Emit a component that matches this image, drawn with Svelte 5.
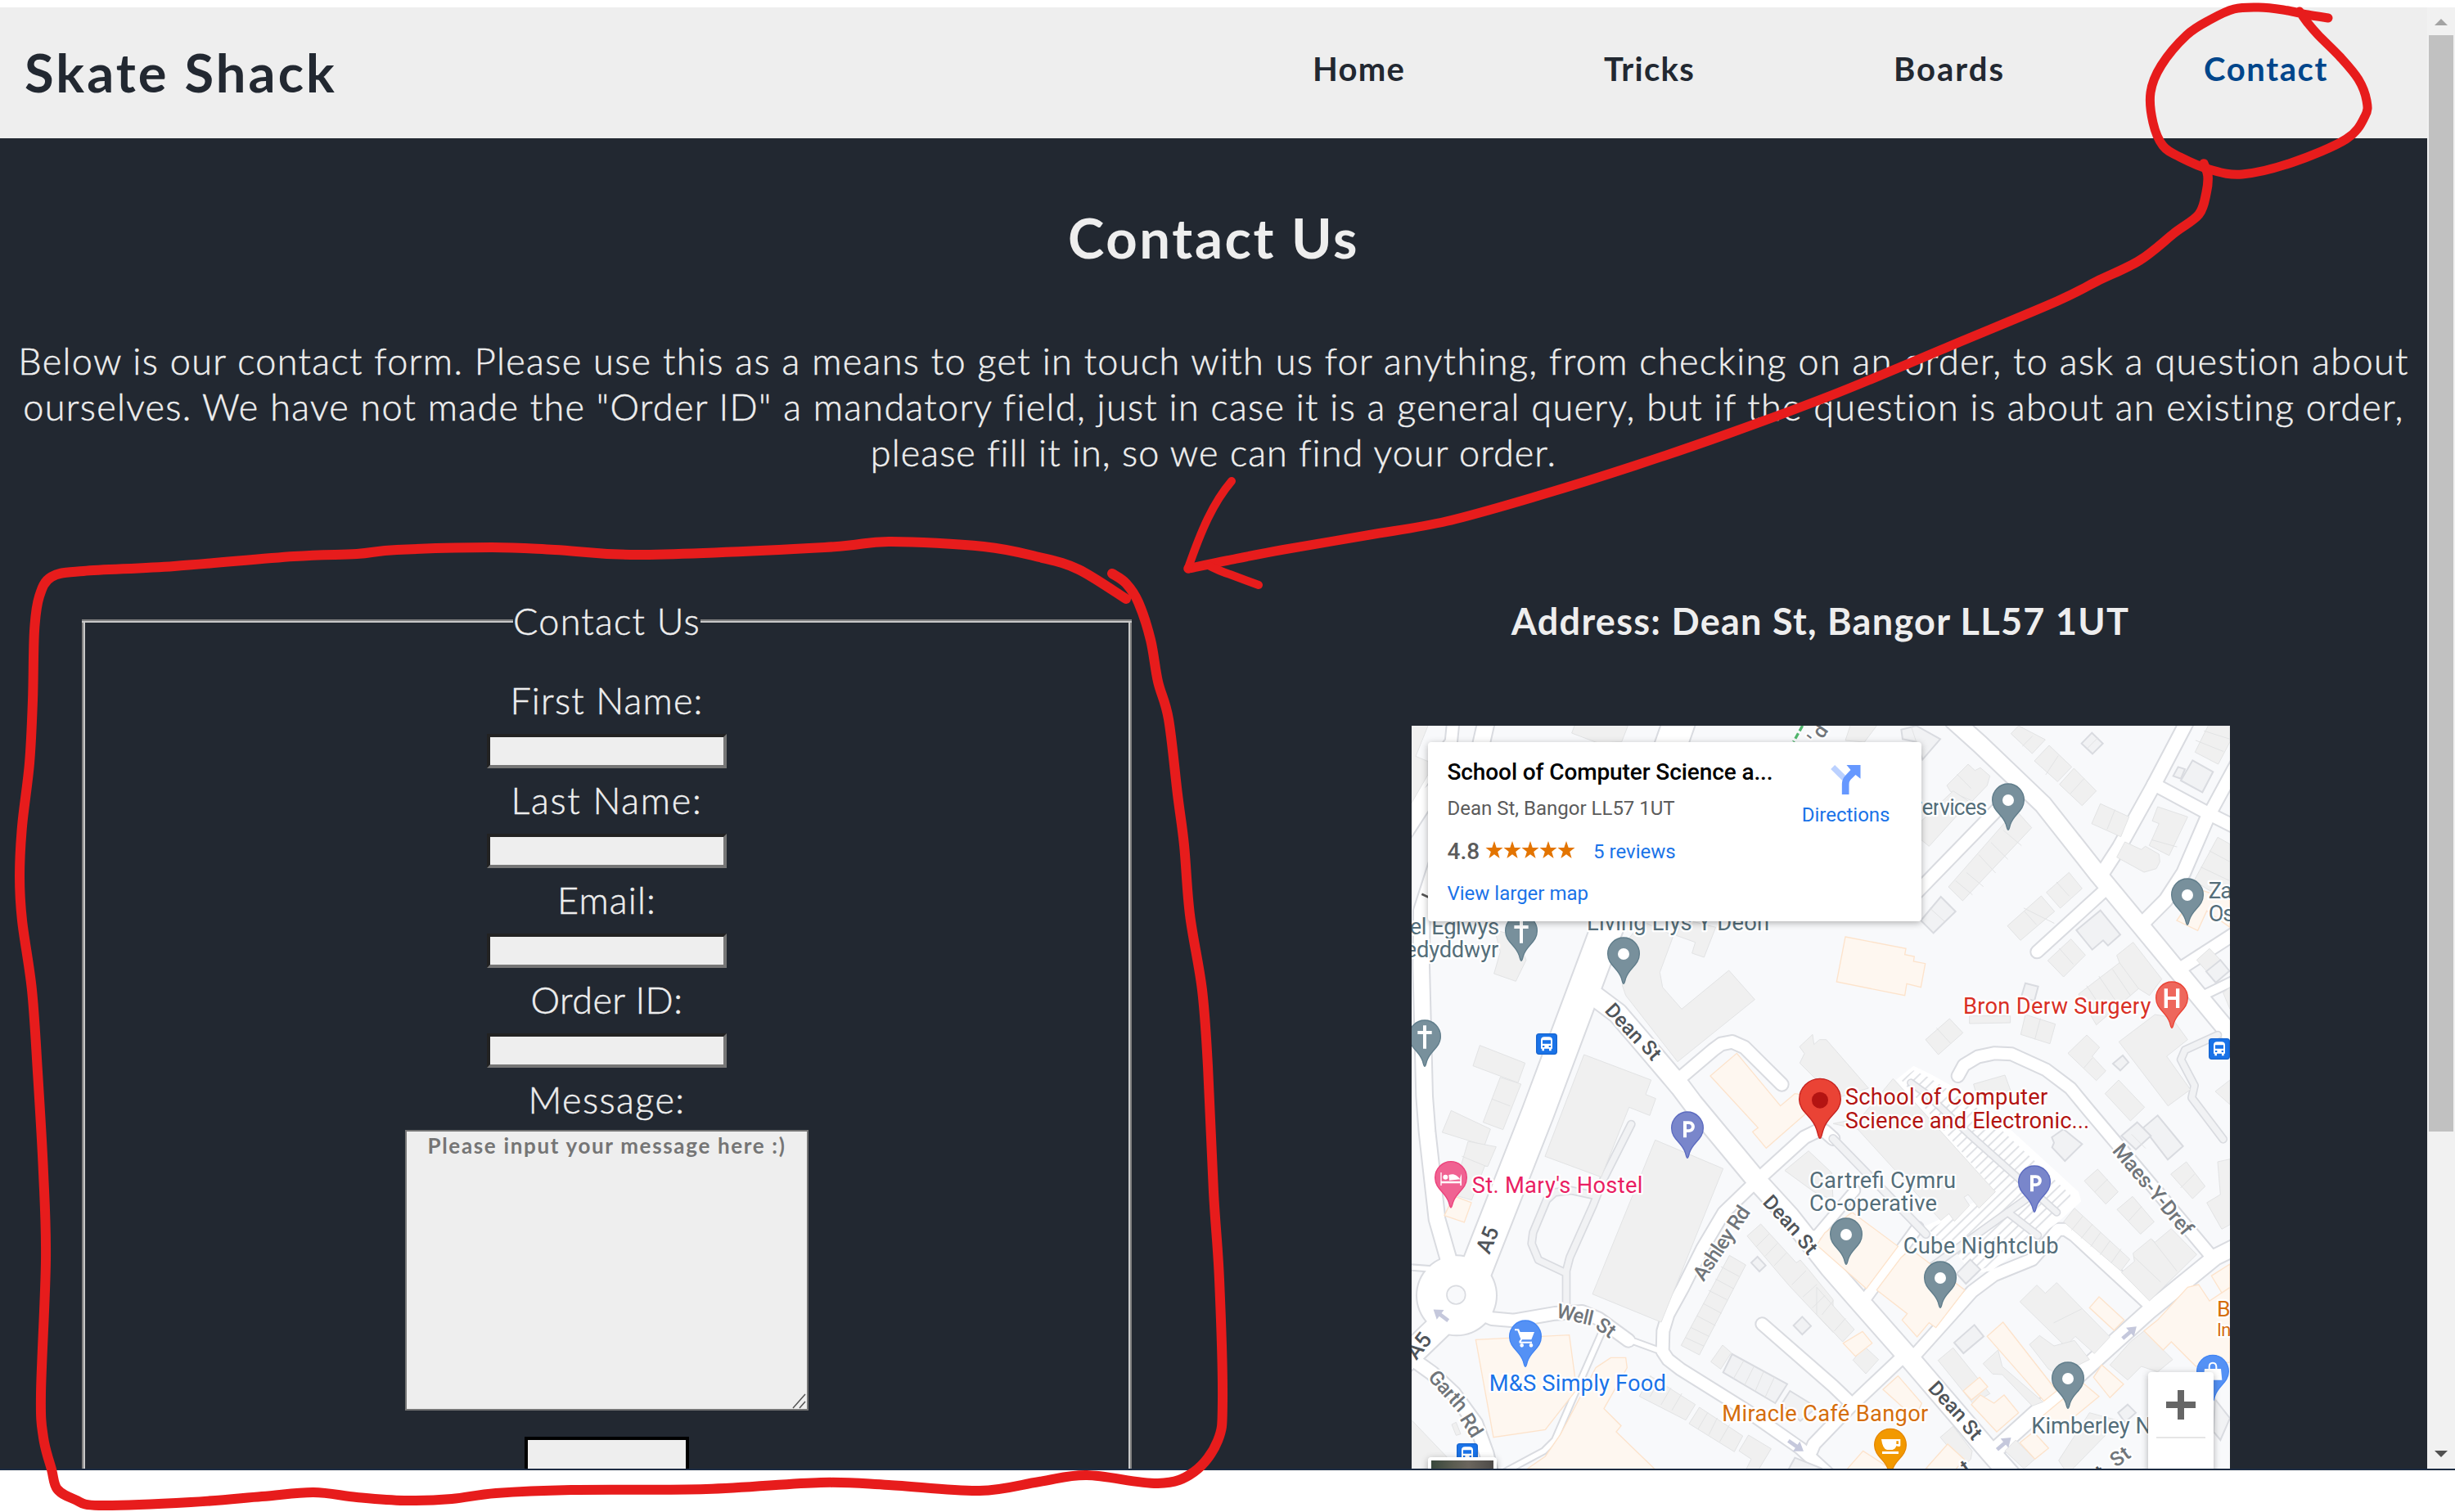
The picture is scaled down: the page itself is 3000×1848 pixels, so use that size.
<script>
  // Map drawing units: one third of a CSS pixel. Each quadrant has its own origin.
  const origin = { A: [0, 0], B: [1500, 0], C: [0, 1380], D: [1500, 1380] };

  function parse(text) {
    let q = 'A';
    const out = [];
    for (const token of text.split(' ')) {
      if (origin[token]) { q = token; continue; }
      const [x, y] = token.split(',').map(Number);
      out.push([x + origin[q][0], y + origin[q][1]]);
    }
    return out;
  }

  const line = (text) => parse(text).map((p) => p.join(',')).join(' ');

  // Catmull-Rom spline through the points, written as cubic segments.
  function smooth(text) {
    const p = parse(text);
    let d = `M${p[0]}`;
    for (let i = 0; i < p.length - 1; i++) {
      const a = p[i - 1] ?? p[i];
      const b = p[i];
      const c = p[i + 1];
      const e = p[i + 2] ?? c;
      d += `C${b[0] + (c[0] - a[0]) / 6},${b[1] + (c[1] - a[1]) / 6} ${c[0] - (e[0] - b[0]) / 6},${c[1] - (e[1] - b[1]) / 6} ${c}`;
    }
    return d;
  }

  const fields = [['first', 'First Name:'], ['last', 'Last Name:'], ['email', 'Email:'], ['order', 'Order ID:']];

  const roads = [
    [40, 'A 168,0 160,80 75,190 0,320'],
    [58, 'A 290,0 265,110 75,278 -20,425'],
    [56, 'A 110,520 52,700 50,900 62,1380 C 72,130 108,450 148,590 160,680'],
    [114, 'A 998,0 970,80 738,745 478,1440 C 250,640 220,700'],
    [70, 'A 690,1015 770,1075 860,1180 1000,1345 C 1045,25 1290,320 1400,440 D 50,630 155,750 340,960 640,1310 720,1400'],
    [44, 'A 985,1325 1120,1210 1150,1188 1190,1180 1235,1200 1372,1336'],
    [42, 'C 1300,290 1160,425 1080,560 1010,700 955,800 937,860 935,935 955,965 1000,1000 1240,1150 1440,1290 1560,1400'],
    [44, 'C 1290,300 1455,150 1500,128 1530,128 D 60,155'],
    [44, 'C 250,790 310,815 390,822 540,796 640,790 700,815 810,895'],
    [18, 'C 815,893 930,935'],
    [88, 'C 130,830 -20,975'],
    [48, 'C 20,965 90,1015 170,1090 250,1200 290,1310 310,1400'],
    [16, 'C 0,626 90,633'],
    [18, 'C 710,870 635,1040 540,1260 500,1300 360,1375'],
    [42, 'C 1300,835 1560,1062 D 120,1120'],
    [44, 'D 310,960 120,1140 -10,1275 C 1480,1300'],
    [42, 'D 350,960 570,715 650,655 790,598 850,530 885,488 912,488 945,510 1210,755'],
    [56, 'D 640,1310 1215,790 1460,590 1560,540'],
    [38, 'D 370,480 180,740'],
    [34, 'C 1480,510 D 0,510 140,345'],
    [62, 'B 500,0 600,90 830,310 1035,570 1320,915 1490,1120 1580,1230'],
    [48, 'B 1360,0 1345,30 1235,240 1110,465 1045,565'],
    [44, 'B 1235,235 1440,345 1560,405'],
    [48, 'B 1440,340 1345,560 1280,660 1190,750'],
    [44, 'B 1440,345 1540,160'],
    [44, 'B 1320,920 1560,765'],
    [30, 'B 1400,1018 1560,940'],
    [42, 'B 1055,625 808,850'],
    [44, 'B 670,320 330,670'],
    [42, 'B 518,1305 540,1265 590,1235 650,1222 715,1225 840,1282 930,1350 D 1000,55 1110,185 1450,590']
  ];

  const lanes = [
    [22, 'C 820,102 720,300 680,400 595,590 582,640 582,760'],
    [22, 'C 680,362 600,345 540,352 510,380 460,500 455,540 480,600 575,645'],
    [22, 'B 1470,1155 1350,1210 1335,1245 1385,1340 1375,1385 D 1490,157'],
    [20, 'B 345,1330 400,1370 D 560,140 880,425'],
    [24, 'D 60,155 250,350 400,505'],
    [22, 'D 700,425 810,510'],
    [22, 'D 770,375 400,640']
  ];

  const buildings = [
    'A 0,0 75,21 30,133 75,152 75,200 0,330',
    'A 620,0 602,48 700,85 785,80 808,21',
    'A 860,738 790,830 788,975 800,1010 990,1253 1273,1025 1178,918 1005,1060 935,980 925,925 975,790',
    'A 985,790 1055,815 1043,855 1087,870 1130,760 1010,730',
    'A 320,770 395,790 435,880 397,958 317,930 340,850',
    'A 265,1193 431,1258 405,1330 240,1268', 'A 340,1310 416,1335 C 350,122 277,95',
    'C 160,52 304,120 282,180 127,132', 'C 222,165 325,185 294,257 283,255 235,380 165,360',
    'A 647,1227 893,1320 873,1373 910,1388 C 888,70 812,40 710,296 504,220',
    'C 908,160 1157,265 930,828 678,725',
    'B 10,1172 -10,1190 -15,1153 -63,1198 -45,1223 -62,1258 0,1320 60,1390 190,1350 35,1172',
    'D 280,-65 160,80 60,100 150,120 455,455 485,430 505,458 560,400 540,370 555,360 595,410 655,350',
    'B 130,0 105,75 175,81 220,21', 'B 555,162 580,185 600,175 635,205 625,240 570,297 490,262 477,240',
    'B 384,370 500,260 560,300 412,463 384,440', 'B 730,330 788,395 535,663 483,612',
    'B 740,21 838,72 790,123 712,50', 'B 852,93 935,172 883,226 798,150', 'B 943,177 1025,260 973,314 890,236',
    'B 1040,307 1145,355 1115,428 1008,380', 'B 1250,318 1360,355 1292,497 1219,460 1255,380 1230,370',
    'B 1130,447 1190,475 1205,463 1255,492 1258,520 1245,545 1200,558 1100,503',
    'B 1435,21 1515,21 1515,80 1472,162 1387,118', 'B 1470,430 1515,455 1515,620 1440,625 1383,590',
    'B 925,559 973,618 893,690 842,632', 'B 823,645 872,702 747,808 699,755', 'B 932,803 985,862 905,942 847,882',
    'B 1160,815 1265,950 1220,1010 1180,985 1025,1118 960,1005 1110,890 1100,863',
    'B 1240,1080 1300,1090 1360,1172 1283,1233 1370,1355 D 1288,35 B 1108,1180',
    'B 487,1095 536,1147 446,1227 399,1172', 'B 765,1080 875,1115 855,1187 748,1153', 'B 560,1085 710,1085 710,1110 560,1113',
    'B 990,1155 1037,1200 1010,1233 1060,1287 1025,1322 921,1222', 'B 575,1335 690,1302 715,1370 590,1390',
    'B 1440,838 1480,880 1430,922 1393,880', 'B 1490,1000 1515,980 1515,1060',
    'B 1107,1320 1202,1420 D 1150,90 B 1057,1370', 'B 1515,1320 1515,1410 1461,1362',
    'C 1180,583 1240,618 1070,948 1003,913', 'C 1295,468 1425,610 1440,600 1470,635 1560,745 1560,865 1400,695 1370,660 1245,512',
    'D 0,700 138,855 95,900 0,800', 'D 175,917 227,965 180,1017 133,967',
    'C 1155,912 1187,940 1148,1000 1112,973', 'C 890,1025 1055,1130 1020,1187 850,1100', 'C 1070,1140 1229,1245 1198,1303 1032,1200',
    'C 1250,1242 1333,1292 1280,1380 1235,1380 1260,1330 1215,1300', 'C 15,1187 180,1360 15,1365',
    'C 1470,200 1555,280 1560,380 1490,350 1383,272', 'C 178,1195 195,1238 178,1243 162,1203',
    'D 1030,267 1105,350 1060,395 981,310', 'D 1158,367 1237,460 1187,505 1101,415', 'D 1355,240 1424,330 1378,375 1298,285',
    'D 945,410 1148,597 1115,640 905,460', 'D 1300,485 1393,580 1220,750 1117,645 1165,605 1160,575 1225,522 1240,535',
    'D 1515,230 1515,470 1485,487 1430,390 1480,360 1470,240',
    'D 807,692 838,722 880,683 1075,882 1018,943 948,880 912,917 745,753',
    'D 817,877 870,915 945,895 1000,965 890,1020 850,1000 780,910',
    'D 500,922 635,1090 600,1110 580,1135 445,968', 'D 665,930 680,990 830,1120 790,1135 680,1020 645,1018 610,980',
    'D 1150,900 1200,860 1305,965 1250,1010 1190,990 1140,1040 1075,985', 'D 500,1210 570,1300 565,1330 540,1355 453,1250',
    'D 1000,1160 1110,1190 920,1385 887,1335', 'D 730,1260 800,1330 760,1365 690,1300'
  ];

  const outlined = [
    'B 365,21 453,70 388,145 365,80 315,70 310,35', 'B 1009,47 1049,86 1011,124 971,86', 'B 1378,148 1453,190 1414,265 1335,222',
    'B 1325,172 1350,180 1335,215 1307,205', 'B 455,648 509,702 428,781 382,735', 'B 1040,698 1113,787 1068,827 1050,808 1010,842 952,771',
    'B 1480,880 1513,920 1463,963 1428,922', 'B 765,965 812,977 798,1030 750,1015', 'B 1122,1230 1143,1255 1113,1285 1086,1260',
    'D 1250,70 1343,183 1287,232 1197,115', 'D 1175,95 1225,145 1170,195 1117,145', 'D 905,120 973,175 910,237 863,187 870,170 862,150',
    'D 563,598 600,635 547,687 513,650', 'D 578,838 612,880 538,942 504,903', 'C 1447,808 1479,842 1447,873 1415,840', 'C 1283,588 1313,620 1290,642 1260,610',
    'C 1190,945 1392,1055 1348,1125 1157,1012', 'C 1402,1080 1500,1140 1440,1190 1370,1130', 'C 1420,1325 1520,1365 1390,1380',
    'D 1140,1130 1170,1160 1130,1195 1105,1160', 'D 1460,1110 1515,1180 1480,1260 1455,1230'
  ];

  const shops = [
    'B 105,795 327,838 323,860 358,867 355,885 398,893 382,980 330,967 323,1010 73,960',
    'A 1207,1222 1367,1415 1420,1370 1500,1380 C 1475,50 1315,190 1265,130 1285,115 1110,-75',
    'B 1400,620 1515,660 1515,760 1430,700 1397,772 1320,735',
    'C 250,892 593,875 620,1075 505,1222 315,1250',
    'C 690,995 745,958 800,958 805,995 720,1145 783,1208 765,1230 915,1375 440,1365 505,1320 560,1240',
    'C 170,365 234,390 208,462 135,437', 'D 130,425 298,550 182,705 0,545 30,500', 'D 345,560 543,710 437,848 412,830 368,882 313,820 332,797 220,710 310,590',
    'D 1035,735 1127,820 1090,858 1000,775', 'D 683,828 880,1080 833,1117 625,880', 'D 168,862 203,905 142,953 97,905', 'D 298,1025 385,1125 360,1180 243,1075',
    'D 597,1030 627,1065 567,1113 537,1080', 'D 600,1095 650,1125 687,1095 740,1160 660,1230 567,1130', 'D 1045,985 1125,1055 1075,1105 1015,1030',
    'D 975,1050 1035,1100 890,1220 830,1170', 'D 1250,820 1360,700 1400,690 1440,750 1515,700 1515,975 1390,990 1300,900 1270,930 1200,860',
    'D 1515,615 1515,700 1485,720 1447,658', 'D 170,1300 270,1365 100,1380', 'D 480,1275 540,1330 500,1380 400,1365', 'D 795,1230 850,1290 800,1330 745,1270'
  ];

  const seams = [
    'B 516,200 565,250', 'B 755,95 790,60', 'B 840,200 885,132', 'B 930,270 980,215', 'B 1065,400 1093,330', 'B 870,745 760,690',
    'B 1230,440 1320,465', 'B 880,595 925,645', 'B 760,700 805,750', 'B 890,838 940,895', 'B 990,975 1060,1080', 'B 1035,940 1110,1050', 'B 1085,915 1150,1010', 'B 1110,890 1180,985',
    'B 550,560 610,610', 'B 595,495 655,560', 'B 640,450 700,510', 'B 685,405 750,460', 'B 510,590 570,640', 'B 440,1130 490,1185', 'B 820,1095 800,1170', 'B 980,1275 1010,1240',
    'B 1390,75 1490,115', 'B 1420,40 1515,70', 'B 1410,540 1515,590', 'B 1440,480 1515,520', 'B 415,690 468,738', 'B 990,106 1030,66', 'B 345,20 365,80',
    'C 1040,848 1105,880', 'C 1062,805 1128,840', 'C 1085,760 1150,795', 'C 1105,712 1170,745', 'C 1130,670 1195,705', 'C 1150,625 1215,660', 'C 1020,885 1085,915',
    'C 1280,550 1325,505', 'C 1312,585 1355,540', 'C 1345,620 1388,575', 'C 1410,690 1460,640', 'C 1450,735 1500,690', 'C 1485,775 1530,730',
    'C 1195,1035 1232,970', 'C 1235,1060 1270,990', 'C 1275,1080 1305,1010', 'C 1310,1105 1345,1030', 'C 930,1130 965,1070', 'C 970,1150 1005,1090', 'C 890,1100 920,1045',
    'C 1065,1220 1100,1160', 'C 1105,1240 1135,1180', 'C 1145,1265 1180,1205', 'C 200,220 285,255', 'A 310,1390 375,1415',
    'D 935,490 975,440', 'D 970,520 1010,470', 'D 1005,550 1040,500', 'D 1040,580 1075,530', 'D 1080,610 1115,560', 'D 1165,590 1260,680', 'D 1230,525 1320,640',
    'D 1020,350 1065,305', 'D 1145,455 1190,405', 'D 1335,335 1385,285', 'D 1155,140 1205,190', 'D 870,830 970,780', 'D 20,800 60,750', 'D 65,860 105,815'
  ];

  const pins = [
    ['slate', 417, 885, 'cross'], ['slate', 63, 1272, 'cross'], ['slate', 792, 969, 'dot'], ['slate', 2202, 405, 'dot'], ['slate', 2859, 753, 'dot'],
    ['coral', 2802, 1131, 'hospital'], ['pink', 159, 1790, 'bed'], ['indigo', 1026, 1608, 'parking'], ['indigo', 2298, 1806, 'parking'],
    ['blue', 432, 2373, 'cart'], ['slate', 1608, 1998, 'dot'], ['slate', 1953, 2157, 'dot'], ['slate', 2421, 2526, 'dot'], ['orange', 1770, 2770, 'cup'], ['blue', 2952, 2500, 'bag']
  ];

  const labels = [
    ['slate', 82, 8, 787, 328, 'el Eglwys'], ['slate', 82, -10, 871, 344, 'edyddwyr'],
    ['slate', 82, 657, 770, 669, 'Living Llys Y Deon'], ['slate', 82, 1840, 349, 285, 'Services'],
    ['slate', 82, 2936, 655, 170, 'Zapp'], ['slate', 82, 2936, 738, 180, 'Osbo'],
    ['coral', 82, 2037, 1076, 688, 'Bron Derw Surgery'],
    ['crimson', 82, 1604, 1410, 743, 'School of Computer'], ['crimson', 82, 1604, 1496, 896, 'Science and Electronic...'],
    ['pink', 82, 236, 1735, 626, "St. Mary's Hostel"], ['blue', 82, 299, 2461, 649, 'M&S Simply Food'],
    ['orange', 82, 1153, 2570, 756, 'Miracle Café Bangor'],
    ['slate', 82, 1473, 1715, 537, 'Cartrefi Cymru'], ['slate', 82, 1473, 1799, 468, 'Co-operative'],
    ['slate', 82, 1817, 1957, 570, 'Cube Nightclub'], ['slate', 82, 2287, 2615, 440, 'Kimberley N'],
    ['orange', 80, 2967, 2188, 150, 'Bar'], ['orange', 66, 2967, 2258, 170, 'Indian']
  ];

  const streets = [
    ['dark', 74, 720, 1067, 47, 170, 'Dean'], ['dark', 74, 852, 1200, 50, 70, 'St'],
    ['dark', 74, 1299, 1771, 47, 170, 'Dean'], ['dark', 74, 1424, 1912, 50, 70, 'St'],
    ['dark', 74, 1905, 2453, 47, 170, 'Dean'], ['dark', 74, 2028, 2592, 50, 70, 'St'],
    ['mid', 76, 1085, 2062, -56, 312, 'Ashley Rd'], ['mid', 74, 543, 2190, 13, 135, 'Well'], ['mid', 74, 685, 2228, 36, 70, 'St'],
    ['mid', 74, 72, 2412, 48, 175, 'Garth'], ['mid', 74, 190, 2562, 58, 88, 'Rd'],
    ['mid', 76, 2581, 1580, 50, 412, 'Maes-Y-Dref'], ['dark', 80, 300, 1962, -68, 98, 'A5'], ['dark', 80, 32, 2350, -52, 98, 'A5'],
    ['mid', 74, 1507, 92, -55, 66, "'d"], ['mid', 74, 2597, 2742, -35, 72, 'St'], ['dark', 74, 2545, 2785, -35, 28, 't'], ['dark', 74, 2050, 2765, -35, 28, 't']
  ];

  const arrows = [[122, 2182, -143], [1424, 2662, 35], [2647, 2246, -41], [2187, 2653, -41]];
  const buses = [[510, 1188], [2976, 1206], [219, 2691]];
  const stars = [0, 1, 2, 3, 4];

  const ring = '2845,22 2820,18 2790,12 2760,9 2730,11 2701,24 2672,43 2641,80 2628,113 2631,150 2643,178 2664,192 2700,207 2740,213 2800,199 2867,170 2890,142 2892,123 2882,97 2860,70 2833,43 2820,28 2810,14';
  const arrow = '2693,200 2698,215 2696,236 2687,262 2658,284 2615,318 2562,344 2514,368 2390,420 2246,480 2112,530 1998,569 1883,605 1768,637 1672,654 1567,672 1500,685 1452,695';
  const box = '1359,701 1376,713 1391,736 1406,782 1415,833 1428,879 1439,971 1447,1033 1454,1118 1469,1210 1476,1303 1483,1457 1490,1564 1494,1711 1488,1761 1459,1799 1415,1813 1328,1803 1270,1811 1197,1822 1086,1815 1003,1812 863,1820 698,1821 606,1825 552,1832 494,1834 436,1830 383,1824 320,1829 233,1836 121,1840 92,1833 70,1820 63,1796 53,1757 50,1703 56,1541 53,1433 46,1310 39,1210 27,1125 24,1071 27,1010 36,933 40,856 42,771 48,729 63,705 102,698 213,692 359,680 436,677 485,672 601,669 678,672 785,678 1008,669 1086,662 1202,668 1270,681 1318,696 1376,732';
</script>

<div class="screen">
  <div class="window">
    <div class="page">
      <header>
        <h1>Skate Shack</h1>
        <nav>
          <a class="home" href="#home">Home</a>
          <a class="tricks" href="#tricks">Tricks</a>
          <a class="boards" href="#boards">Boards</a>
          <a class="active" href="#contact">Contact</a>
        </nav>
      </header>
      <main>
        <h2>Contact Us</h2>
        <div class="intro">
          <p class="one">Below is our contact form. Please use this as a means to get in touch with us for anything, from checking on an order, to ask a question about</p>
          <p class="two">ourselves. We have not made the "Order ID" a mandatory field, just in case it is a general query, but if the question is about an existing order,</p>
          <p class="three">please fill it in, so we can find your order.</p>
        </div>
        <div class="columns">
          <form>
            <div class="legend"><i></i><span>Contact Us</span><i></i></div>
            <div class="fields">
              {#each fields as [name, text]}
                <label class={name} for={name}>{text}</label>
                <input id={name} type="text" />
              {/each}
              <label class="text" for="message">Message:</label>
              <div class="message" id="message">
                Please input your message here :)
                <svg class="grip" viewBox="0 0 20 20"><path d="M3 19L18 2M11 19L18 11" /></svg>
              </div>
              <div class="submit"></div>
            </div>
          </form>
          <section>
            <h3>Address: Dean St, Bangor LL57 1UT</h3>
            <div class="map">
              <svg class="tiles" viewBox="15 21 3000 2724">
                <defs>
                  <pattern id="bays" width="26" height="26" patternUnits="userSpaceOnUse" patternTransform="rotate(46)">
                    <path d="M3 0V26" stroke="#e0e2e6" stroke-width="6" />
                  </pattern>
                </defs>
                <g class="casing">
                  {#each roads as [w, pts]}<polyline points={line(pts)} stroke-width={w + 12} />{/each}
                  <circle cx="180" cy="2110" r="150" />
                </g>
                <g class="surface">
                  {#each roads as [w, pts]}<polyline points={line(pts)} stroke-width={w} />{/each}
                  <circle cx="180" cy="2110" r="144" />
                </g>
                <circle class="island" cx="178" cy="2108" r="34" />
                <polygon class="parking" points={line('B 290,1320 355,1268 420,1300 D 600,20 960,350 970,385 880,465 640,640 570,650 500,560 390,480 655,350')} />
                <polygon fill="url(#bays)" points={line('B 310,1320 355,1285 410,1310 D 600,50 930,360 930,390 870,450 640,625 570,640 500,560 410,490 655,350')} />
                <g class="lane-casing">{#each lanes as [w, pts]}<polyline points={line(pts)} stroke-width={w + 10} />{/each}</g>
                <g class="lane">{#each lanes as [w, pts]}<polyline points={line(pts)} stroke-width={w} />{/each}</g>
                <g class="building">{#each buildings as b}<polygon points={line(b)} />{/each}</g>
                <g class="outlined">{#each outlined as b}<polygon points={line(b)} />{/each}</g>
                <g class="shop">{#each shops as b}<polygon points={line(b)} />{/each}</g>
                <g class="seam">{#each seams as s}<polyline points={line(s)} />{/each}</g>
                <path class="trail" d="M1448 21L1415 80" />
                <path class="dash" d="M52 638L78 650" />
                {#each arrows as [x, y, r]}
                  <path class="oneway" transform="translate({x} {y}) rotate({r})" d="M-34 -7H2V-22L34 0L2 22V7H-34Z" />
                {/each}
                {#each streets as [tone, size, x, y, r, w, text]}
                  <text class="street {tone}" font-size={size} transform="translate({x} {y}) rotate({r})" textLength={w}>{text}</text>
                {/each}
                {#each buses as [x, y]}
                  <g transform="translate({x} {y})">
                    <rect class="stop" x="-37" y="-37" width="74" height="74" rx="9" />
                    <path fill="#fff" fill-rule="evenodd" d="M-21 -14Q-21 -26 -8 -26H8Q21 -26 21 -14V17H17V25H9V17H-9V25H-17V17H-21ZM-15 -14V-1H15V-14ZM-15 6V12H-8V6ZM8 6V12H15V6Z" />
                  </g>
                {/each}
                {#each pins as [tone, x, y, glyph]}
                  <g class="pin {tone}" transform="translate({x} {y})">
                    <path d="M0 -2C-3 -2 -4 -9 -8 -22C-20 -60 -58 -70 -58 -112A58 59 0 0 1 58 -112C58 -70 20 -60 8 -22C4 -9 3 -2 0 -2Z" />
                    {#if glyph === 'dot'}<circle fill="#fff" cy="-111" r="21" />
                    {:else if glyph === 'cross'}<path class="ink" d="M-6 -152H6V-132H26V-120H6V-67H-6V-120H-26V-132H-6Z" />
                    {:else if glyph === 'hospital'}<path class="ink" d="M-28 -146H-15V-117H15V-146H28V-75H15V-105H-15V-75H-28Z" />
                    {:else if glyph === 'parking'}<path class="ink" fill-rule="evenodd" d="M-15 -137H5C34 -137 34 -96 5 -96H-3V-77H-15ZM-3 -126V-107H5C18 -107 18 -126 5 -126Z" />
                    {:else if glyph === 'bed'}<path class="ink" d="M-38 -131H-34V-99H34V-113L39 -126V-83H34V-91H-34V-83H-38ZM-8 -122C10 -128 22 -122 34 -106L-6 -102ZM-29 -114A9 9 0 1 1 -11 -114A9 9 0 1 1 -29 -114Z" />
                    {:else if glyph === 'cart'}<path class="ink" d="M-39 -140H-24L-19 -129H33L22 -101H-12L-16 -94H24V-88H-22L-23 -95L-17 -103L-29 -134H-39ZM-20 -80A7 7 0 1 1 -6 -80A7 7 0 1 1 -20 -80ZM14 -80A7 7 0 1 1 28 -80A7 7 0 1 1 14 -80Z" />
                    {:else if glyph === 'cup'}<path class="ink" fill-rule="evenodd" d="M-33 -133H37V-109Q35 -103 22 -108Q18 -96 8 -94H-12Q-28 -96 -33 -133ZM22 -126V-115H30V-126ZM-30 -88H30V-79H-30Z" />
                    {:else}<path class="bag" d="M-13 -120V-128Q-13 -143 0 -143Q13 -143 13 -128V-120" /><path class="ink" d="M-30 -121H30L34 -80H-34Z" />{/if}
                  </g>
                {/each}
                {#each labels as [tone, size, x, y, w, text]}
                  <text class="place {tone}" font-size={size} {x} {y} textLength={w}>{text}</text>
                {/each}
                <path class="target" d="M1512 1534C1506 1534 1506 1520 1499 1500C1484 1450 1436 1438 1436 1391A76 76 0 0 1 1588 1391C1588 1438 1540 1450 1525 1500C1518 1520 1518 1534 1512 1534Z" />
                <circle fill="#b31412" cx="1512" cy="1394" r="30" />
              </svg>
              <div class="card">
                <div class="details">
                  <b class="title">School of Computer Science a...</b>
                  <span class="where">Dean St, Bangor LL57 1UT</span>
                  <div class="rating">
                    <b>4.8</b>
                    <span class="stars">
                      {#each stars as s (s)}
                        <svg viewBox="0 0 22 22"><path d="M11 0L13.7 8H21.500L15.200 12.900L17.600 21L11 16.200L4.400 21L6.800 12.900L0.500 8H8.300Z" /></svg>
                      {/each}
                    </span>
                    <a href="#reviews">5 reviews</a>
                  </div>
                  <a href="#larger">View larger map</a>
                </div>
                <a class="directions" href="#directions">
                  <svg viewBox="0 0 110 108"><path fill="#bbd1ff" d="M0 15L15 0L54 38L43 58Z" /><path fill="#6698ff" d="M41 108V68Q42 50 54 38L73 18L58 0H109V50L91 36L72 55Q67 61 67 72V108Z" /></svg>
                  <span>Directions</span>
                </a>
              </div>
              <div class="zoom"><svg viewBox="0 0 36 36"><path d="M14 0H22V14H36V22H22V36H14V22H0V14H14Z" /></svg><i></i></div>
              <div class="satellite"></div>
            </div>
          </section>
        </div>
      </main>
    </div>
    <div class="scrollbar">
      <svg viewBox="0 0 16 8"><path fill="#a3a3a3" d="M8 0L16 8H0Z" /></svg>
      <div class="thumb"></div>
      <svg class="down" viewBox="0 0 16 8"><path fill="#505050" d="M0 0H16L8 8Z" /></svg>
    </div>
  </div>
  <div class="edge"></div>
  <svg class="pen" viewBox="0 0 3000 1848">
    <path d={smooth(ring)} stroke-width="11" />
    <path d={smooth(arrow)} stroke-width="11.500" />
    <path d="M1505 588C1482 615 1468 648 1452 694M1475 690Q1490 698 1503 702L1538 715" stroke-width="10" />
    <path d={smooth(box)} stroke-width="12" />
  </svg>
</div>

<style>
  :global(body) { margin: 0; background: #fff; }
  .screen {
    position: relative; width: 3000px; height: 1848px; overflow: hidden; box-sizing: border-box;
    padding-top: 9px; background: #fff; font-family: Lato, "Open Sans", sans-serif;
  }
  .window { display: flex; height: 1786px; overflow: hidden; }
  .edge { height: 2px; background: #1c2b42; }
  .page { width: 2966px; background: #222831; color: #eee; overflow: hidden; }
  header { display: flex; justify-content: space-between; height: 160px; background: #eee; color: #222831; }
  h1, h2, h3, p { margin: 0; white-space: nowrap; }
  h1 { padding: 41px 0 0 30px; font-size: 65px; line-height: 76px; font-weight: 700; letter-spacing: 3.100px; }
  nav { display: flex; gap: 243px; padding: 49px 121px 0 0; }
  nav a { color: #222831; font-size: 40px; line-height: 52px; font-weight: 700; text-decoration: none; }
  nav .home { letter-spacing: 1.240px; }
  nav .tricks { letter-spacing: 1.290px; }
  nav .boards { letter-spacing: 2px; }
  nav .active { color: #00468b; letter-spacing: 1.620px; }
  h2 { padding-top: 83px; font-size: 67px; line-height: 76px; letter-spacing: 2.640px; text-align: center; }
  .intro { padding-top: 85px; font-size: 45px; line-height: 56px; font-weight: 300; text-align: center; -webkit-text-stroke: 0.500px #eee; }
  .one { letter-spacing: 1.350px; }
  .two { letter-spacing: 1.300px; }
  .three { letter-spacing: 1.080px; }
  .columns { display: flex; padding-top: 150px; }
  form { width: 1483px; box-sizing: border-box; padding: 0 100px; font-size: 45px; font-weight: 300; }
  .legend { display: flex; align-items: center; height: 56px; letter-spacing: 1.280px; -webkit-text-stroke: 0.500px #eee; }
  .legend i { flex: 1; height: 2px; border-top: 2px solid #808080; background: #c8c8c8; }
  .fields {
    display: flex; flex-direction: column; align-items: center; height: 1100px; margin-top: -30px; padding-top: 71px;
    border: solid #808080; border-width: 0 2px; box-shadow: inset 2px 0 #c8c8c8, inset -2px 0 #c8c8c8;
  }
  label { height: 69px; line-height: 56px; -webkit-text-stroke: 0.500px #eee; }
  .first { letter-spacing: 1.180px; }
  .last { letter-spacing: 1.730px; }
  .email { letter-spacing: 1.160px; }
  .order { letter-spacing: 0.460px; }
  .text { letter-spacing: 1.430px; }
  input {
    box-sizing: border-box; width: 293px; height: 42px; margin: 0 0 11px; padding: 0; border: 4px solid;
    border-color: #222 #767676 #767676 #222; border-radius: 0; background: #eee;
  }
  .message {
    position: relative; box-sizing: border-box; width: 493px; height: 343px; margin-top: -4px; white-space: nowrap;
    border: 2px solid #767676; background: #eee; color: #757575; font-size: 26px; line-height: 35px; font-weight: 700;
    letter-spacing: 1.670px; text-align: center;
  }
  .grip { position: absolute; right: 0; bottom: 0; width: 20px; height: 20px; }
  .grip path { fill: none; stroke: #555; stroke-width: 1.500; }
  .submit { box-sizing: border-box; width: 201px; height: 60px; margin-top: 32px; border: 4px solid #000; background: #eee; }
  section { flex: 1; }
  h3 { font-size: 45px; line-height: 56px; letter-spacing: 1.290px; text-align: center; }
  .map { position: relative; width: 1000px; height: 908px; margin: 100px auto 0; overflow: hidden; background: #f8f9fb; font-family: Roboto, sans-serif; }
  .tiles { display: block; width: 1000px; height: 908px; }
  .tiles polyline { fill: none; stroke-linejoin: round; stroke-linecap: round; }
  .casing polyline, .lane-casing polyline { stroke: #d9dbe0; }
  .casing circle { fill: #d9dbe0; }
  .surface polyline { stroke: #fff; }
  .surface circle { fill: #fff; }
  .island { fill: #f8f9fb; stroke: #d9dbe0; stroke-width: 5; }
  .parking { fill: #fff; }
  .lane polyline { stroke: #f1f2f4; }
  .building polygon { fill: #f0f0f0; stroke: #e2e3e4; stroke-width: 3; }
  .outlined polygon { fill: #f1f2f4; stroke: #d9dbe0; stroke-width: 6; }
  .shop polygon { fill: #fef7f0; stroke: #fde3cb; stroke-width: 4; }
  .seam polyline { stroke: #e2e3e4; stroke-width: 3; }
  .trail { stroke: #50b56c; stroke-width: 10; stroke-dasharray: 22 10; }
  .dash { stroke: #555; stroke-width: 8; }
  .oneway { fill: #c5c8dc; }
  .street, .place { paint-order: stroke; stroke: #fff; stroke-width: 14; stroke-linejoin: round; }
  .street { font-weight: 500; }
  .dark { fill: #4f5459; }
  .mid { fill: #70757a; }
  text.slate { fill: #546e7a; }
  text.coral { fill: #d93025; }
  text.crimson { fill: #b31412; }
  text.pink { fill: #e91e63; }
  text.blue { fill: #1a73e8; }
  text.orange { fill: #d56e0c; }
  .stop { fill: #1a73e8; stroke: #1765cf; stroke-width: 4; }
  .pin { stroke-width: 4; }
  .pin.slate { fill: #78909c; stroke: #607d8b; }
  .pin.coral { fill: #ee675c; stroke: #ea4335; }
  .pin.pink { fill: #f06292; stroke: #ec407a; }
  .pin.indigo { fill: #7986cb; stroke: #5c6bc0; }
  .pin.blue { fill: #5491f5; stroke: #4285f4; }
  .pin.orange { fill: #f29900; stroke: #e58600; }
  .pin circle, .pin .ink { fill: #fff; stroke: none; }
  .pin .bag { fill: none; stroke: #fff; stroke-width: 6; }
  .target { fill: #ea4335; stroke: #c5221f; stroke-width: 4; }
  .card {
    position: absolute; left: 20px; top: 20px; width: 603px; height: 219px; box-sizing: border-box; padding: 20px 38px 0 24px;
    display: flex; justify-content: space-between; background: #fff; border-radius: 4px; box-shadow: 0 2px 8px rgba(0, 0, 0, 0.3);
    color: #5b5b5b; font-size: 24px; line-height: 30px; white-space: nowrap;
  }
  .card a { color: #1a73e8; text-decoration: none; }
  .details { display: flex; flex-direction: column; }
  .title { color: #000; font-size: 28px; line-height: 33px; font-weight: 500; letter-spacing: -0.100px; }
  .where { margin-top: 13px; }
  .rating { display: flex; align-items: center; height: 33px; margin: 21px 0 20px; }
  .rating b { font-size: 28px; font-weight: 500; }
  .stars { display: flex; margin: -3px 22px 0 7px; }
  .stars svg { width: 22px; height: 22px; fill: #e37400; }
  .directions { display: flex; flex-direction: column; align-items: center; padding-top: 8px; }
  .directions svg { width: 37px; height: 36px; margin-bottom: 10px; }
  .zoom {
    position: absolute; left: 900px; top: 790px; width: 80px; height: 160px; background: #fff; border-radius: 4px;
    box-shadow: 0 2px 8px rgba(0, 0, 0, 0.3); display: flex; flex-direction: column; align-items: center; gap: 21px;
  }
  .zoom svg { width: 36px; height: 36px; margin-top: 22px; fill: #666; }
  .zoom i { width: 60px; height: 2px; background: #e6e6e6; }
  .satellite {
    position: absolute; left: 20px; top: 894px; width: 76px; height: 60px; border: 4px solid #fff; border-radius: 4px;
    background: linear-gradient(90deg, #39483c, #5a5c50 35%, #6b665e 60%, #4d4a48); box-shadow: 0 2px 8px rgba(0, 0, 0, 0.3);
  }
  .scrollbar { display: flex; flex-direction: column; align-items: center; width: 34px; background: #f1f1f1; }
  .scrollbar svg { width: 16px; height: 8px; margin-top: 14px; }
  .thumb { width: 30px; height: 1340px; margin-top: 12px; background: #c1c1c1; }
  .scrollbar .down { margin: auto 0 14px; }
  .pen { position: absolute; left: 0; top: 0; width: 3000px; height: 1848px; fill: none; stroke: #e71c1c; stroke-linecap: round; stroke-linejoin: round; }
</style>
